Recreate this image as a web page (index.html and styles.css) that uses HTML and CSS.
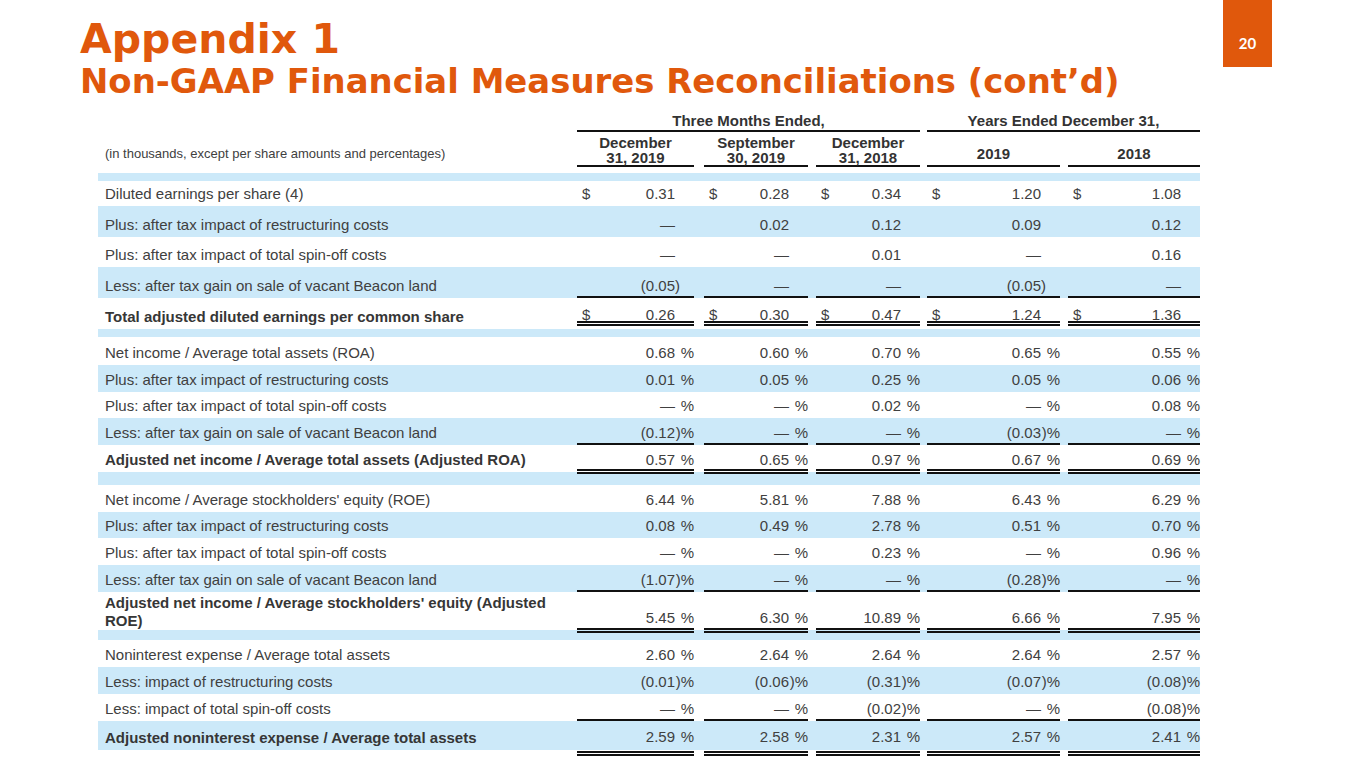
FILE: index.html
```html
<!DOCTYPE html>
<html lang="en">
<head>
<meta charset="utf-8">
<title>Appendix 1</title>
<link rel="stylesheet" href="styles.css">
</head>
<body>
<div class="top">
  <div class="title">
    <h1 class="t1">Appendix 1</h1>
    <h2 class="t2">Non-GAAP Financial Measures Reconciliations (cont’d)</h2>
  </div>
  <div class="pg">20</div>
</div>

<div class="fin">
  <div class="row hA">
    <div></div>
    <div class="grp g1">Three Months Ended,</div>
    <div class="grp g2">Years Ended December 31,</div>
  </div>
  <div class="row cols hB">
    <div class="note">(in thousands, except per share amounts and percentages)</div>
    <div class="ch">December<br>31, 2019</div>
    <div class="ch">September<br>30, 2019</div>
    <div class="ch">December<br>31, 2018</div>
    <div class="ch yr">2019</div>
    <div class="ch yr">2018</div>
  </div>
  <div class="sep b first"></div>

  <!-- Section 1: EPS -->
  <div class="row cols h25">
    <div class="lbl">Diluted earnings per share (4)</div>
    <div class="v"><span class="cur">$</span><span class="n">0.31</span><span class="s"></span></div>
    <div class="v"><span class="cur">$</span><span class="n">0.28</span><span class="s"></span></div>
    <div class="v"><span class="cur">$</span><span class="n">0.34</span><span class="s"></span></div>
    <div class="v"><span class="cur">$</span><span class="n">1.20</span><span class="s"></span></div>
    <div class="v"><span class="cur">$</span><span class="n">1.08</span><span class="s"></span></div>
  </div>
  <div class="row cols h31 b">
    <div class="lbl">Plus: after tax impact of restructuring costs</div>
    <div class="v"><span class="n">—</span><span class="s"></span></div>
    <div class="v"><span class="n">0.02</span><span class="s"></span></div>
    <div class="v"><span class="n">0.12</span><span class="s"></span></div>
    <div class="v"><span class="n">0.09</span><span class="s"></span></div>
    <div class="v"><span class="n">0.12</span><span class="s"></span></div>
  </div>
  <div class="row cols h30">
    <div class="lbl">Plus: after tax impact of total spin-off costs</div>
    <div class="v"><span class="n">—</span><span class="s"></span></div>
    <div class="v"><span class="n">—</span><span class="s"></span></div>
    <div class="v"><span class="n">0.01</span><span class="s"></span></div>
    <div class="v"><span class="n">—</span><span class="s"></span></div>
    <div class="v"><span class="n">0.16</span><span class="s"></span></div>
  </div>
  <div class="row cols h31 b u">
    <div class="lbl">Less: after tax gain on sale of vacant Beacon land</div>
    <div class="v"><span class="n">(0.05</span><span class="s">)</span></div>
    <div class="v"><span class="n">—</span><span class="s"></span></div>
    <div class="v"><span class="n">—</span><span class="s"></span></div>
    <div class="v"><span class="n">(0.05</span><span class="s">)</span></div>
    <div class="v"><span class="n">—</span><span class="s"></span></div>
  </div>
  <div class="row cols h31 uu uu1">
    <div class="lbl bold">Total adjusted diluted earnings per common share</div>
    <div class="v"><span class="cur">$</span><span class="n">0.26</span><span class="s"></span></div>
    <div class="v"><span class="cur">$</span><span class="n">0.30</span><span class="s"></span></div>
    <div class="v"><span class="cur">$</span><span class="n">0.47</span><span class="s"></span></div>
    <div class="v"><span class="cur">$</span><span class="n">1.24</span><span class="s"></span></div>
    <div class="v"><span class="cur">$</span><span class="n">1.36</span><span class="s"></span></div>
  </div>
  <div class="sep b s8"></div>

  <!-- Section 2: ROA -->
  <div class="row cols h28">
    <div class="lbl">Net income / Average total assets (ROA)</div>
    <div class="v p"><span class="n">0.68</span><span class="s">%</span></div>
    <div class="v p"><span class="n">0.60</span><span class="s">%</span></div>
    <div class="v p"><span class="n">0.70</span><span class="s">%</span></div>
    <div class="v p"><span class="n">0.65</span><span class="s">%</span></div>
    <div class="v p"><span class="n">0.55</span><span class="s">%</span></div>
  </div>
  <div class="row cols h27 b">
    <div class="lbl">Plus: after tax impact of restructuring costs</div>
    <div class="v p"><span class="n">0.01</span><span class="s">%</span></div>
    <div class="v p"><span class="n">0.05</span><span class="s">%</span></div>
    <div class="v p"><span class="n">0.25</span><span class="s">%</span></div>
    <div class="v p"><span class="n">0.05</span><span class="s">%</span></div>
    <div class="v p"><span class="n">0.06</span><span class="s">%</span></div>
  </div>
  <div class="row cols h26">
    <div class="lbl">Plus: after tax impact of total spin-off costs</div>
    <div class="v p"><span class="n">—</span><span class="s">%</span></div>
    <div class="v p"><span class="n">—</span><span class="s">%</span></div>
    <div class="v p"><span class="n">0.02</span><span class="s">%</span></div>
    <div class="v p"><span class="n">—</span><span class="s">%</span></div>
    <div class="v p"><span class="n">0.08</span><span class="s">%</span></div>
  </div>
  <div class="row cols h27 b u">
    <div class="lbl">Less: after tax gain on sale of vacant Beacon land</div>
    <div class="v p"><span class="n">(0.12</span><span class="s">)%</span></div>
    <div class="v p"><span class="n">—</span><span class="s">%</span></div>
    <div class="v p"><span class="n">—</span><span class="s">%</span></div>
    <div class="v p"><span class="n">(0.03</span><span class="s">)%</span></div>
    <div class="v p"><span class="n">—</span><span class="s">%</span></div>
  </div>
  <div class="row cols h27 uu uu2">
    <div class="lbl bold">Adjusted net income / Average total assets (Adjusted ROA)</div>
    <div class="v p"><span class="n">0.57</span><span class="s">%</span></div>
    <div class="v p"><span class="n">0.65</span><span class="s">%</span></div>
    <div class="v p"><span class="n">0.97</span><span class="s">%</span></div>
    <div class="v p"><span class="n">0.67</span><span class="s">%</span></div>
    <div class="v p"><span class="n">0.69</span><span class="s">%</span></div>
  </div>
  <div class="sep b s13"></div>

  <!-- Section 3: ROE -->
  <div class="row cols h27">
    <div class="lbl">Net income / Average stockholders' equity (ROE)</div>
    <div class="v p"><span class="n">6.44</span><span class="s">%</span></div>
    <div class="v p"><span class="n">5.81</span><span class="s">%</span></div>
    <div class="v p"><span class="n">7.88</span><span class="s">%</span></div>
    <div class="v p"><span class="n">6.43</span><span class="s">%</span></div>
    <div class="v p"><span class="n">6.29</span><span class="s">%</span></div>
  </div>
  <div class="row cols h26 b">
    <div class="lbl">Plus: after tax impact of restructuring costs</div>
    <div class="v p"><span class="n">0.08</span><span class="s">%</span></div>
    <div class="v p"><span class="n">0.49</span><span class="s">%</span></div>
    <div class="v p"><span class="n">2.78</span><span class="s">%</span></div>
    <div class="v p"><span class="n">0.51</span><span class="s">%</span></div>
    <div class="v p"><span class="n">0.70</span><span class="s">%</span></div>
  </div>
  <div class="row cols h27">
    <div class="lbl">Plus: after tax impact of total spin-off costs</div>
    <div class="v p"><span class="n">—</span><span class="s">%</span></div>
    <div class="v p"><span class="n">—</span><span class="s">%</span></div>
    <div class="v p"><span class="n">0.23</span><span class="s">%</span></div>
    <div class="v p"><span class="n">—</span><span class="s">%</span></div>
    <div class="v p"><span class="n">0.96</span><span class="s">%</span></div>
  </div>
  <div class="row cols h27 b u">
    <div class="lbl">Less: after tax gain on sale of vacant Beacon land</div>
    <div class="v p"><span class="n">(1.07</span><span class="s">)%</span></div>
    <div class="v p"><span class="n">—</span><span class="s">%</span></div>
    <div class="v p"><span class="n">—</span><span class="s">%</span></div>
    <div class="v p"><span class="n">(0.28</span><span class="s">)%</span></div>
    <div class="v p"><span class="n">—</span><span class="s">%</span></div>
  </div>
  <div class="row cols h38 uu uu3">
    <div class="lbl bold two">Adjusted net income / Average stockholders' equity (Adjusted<br>ROE)</div>
    <div class="v p"><span class="n">5.45</span><span class="s">%</span></div>
    <div class="v p"><span class="n">6.30</span><span class="s">%</span></div>
    <div class="v p"><span class="n">10.89</span><span class="s">%</span></div>
    <div class="v p"><span class="n">6.66</span><span class="s">%</span></div>
    <div class="v p"><span class="n">7.95</span><span class="s">%</span></div>
  </div>
  <div class="sep b s10"></div>

  <!-- Section 4: Noninterest expense -->
  <div class="row cols h27">
    <div class="lbl">Noninterest expense / Average total assets</div>
    <div class="v p"><span class="n">2.60</span><span class="s">%</span></div>
    <div class="v p"><span class="n">2.64</span><span class="s">%</span></div>
    <div class="v p"><span class="n">2.64</span><span class="s">%</span></div>
    <div class="v p"><span class="n">2.64</span><span class="s">%</span></div>
    <div class="v p"><span class="n">2.57</span><span class="s">%</span></div>
  </div>
  <div class="row cols h27 b">
    <div class="lbl">Less: impact of restructuring costs</div>
    <div class="v p"><span class="n">(0.01</span><span class="s">)%</span></div>
    <div class="v p"><span class="n">(0.06</span><span class="s">)%</span></div>
    <div class="v p"><span class="n">(0.31</span><span class="s">)%</span></div>
    <div class="v p"><span class="n">(0.07</span><span class="s">)%</span></div>
    <div class="v p"><span class="n">(0.08</span><span class="s">)%</span></div>
  </div>
  <div class="row cols h27 u">
    <div class="lbl">Less: impact of total spin-off costs</div>
    <div class="v p"><span class="n">—</span><span class="s">%</span></div>
    <div class="v p"><span class="n">—</span><span class="s">%</span></div>
    <div class="v p"><span class="n">(0.02</span><span class="s">)%</span></div>
    <div class="v p"><span class="n">—</span><span class="s">%</span></div>
    <div class="v p"><span class="n">(0.08</span><span class="s">)%</span></div>
  </div>
  <div class="row cols h29 b uu uu4">
    <div class="lbl bold">Adjusted noninterest expense / Average total assets</div>
    <div class="v p"><span class="n">2.59</span><span class="s">%</span></div>
    <div class="v p"><span class="n">2.58</span><span class="s">%</span></div>
    <div class="v p"><span class="n">2.31</span><span class="s">%</span></div>
    <div class="v p"><span class="n">2.57</span><span class="s">%</span></div>
    <div class="v p"><span class="n">2.41</span><span class="s">%</span></div>
  </div>
</div>
</body>
</html>
```
FILE: styles.css
```css
* { box-sizing: border-box; }
html, body { margin: 0; padding: 0; background: #fff; }
body {
  width: 1365px;
  height: 768px;
  overflow: hidden;
  font-family: "Liberation Sans", Arial, sans-serif;
  color: #404040;
}

.top {
  display: flex;
  justify-content: space-between;
  align-items: flex-start;
  padding-left: 80px;
  padding-right: 93px;
}
.title {
  padding-top: 19px;
  color: #e0580c;
  font-family: "DejaVu Sans", Verdana, sans-serif;
  font-weight: bold;
}
.t1 { margin: 0; font-size: 41px; line-height: 41px; font-weight: bold; }
.t2 { margin: 5px 0 0; font-size: 33.9px; line-height: 34px; font-weight: bold; white-space: nowrap; }
.pg {
  width: 49px;
  height: 67px;
  background: #e0580c;
  color: #fff;
  font-family: Lato, "Open Sans", sans-serif;
  font-weight: bold;
  font-size: 15px;
  line-height: 18px;
  text-align: center;
  padding-top: 34px;
}

.fin { margin: 13px 0 0 98px; width: 1102px; }

.row {
  display: grid;
  grid-template-columns: 479px 117px 114px 112px 140px 140px;
  font-size: 15px;
}
.cols > :nth-child(3) { margin-left: 10px; }
.cols > :nth-child(4) { margin-left: 8px; }
.cols > :nth-child(5) { margin-left: 7px; }
.cols > :nth-child(6) { margin-left: 8px; }

.b { background: #cce9f9; }

/* header */
.hA { height: 20px; align-items: end; }
.grp {
  font-weight: bold;
  color: #333;
  text-align: center;
  line-height: 17px;
  padding-bottom: 1px;
  border-bottom: 2px solid #111;
}
.g1 { grid-column: 2 / 5; }
.g2 { grid-column: 5 / 7; margin-left: 7px; }

.hB { height: 35px; }
.note { align-self: end; font-size: 13px; line-height: 15px; padding: 0 0 6px 7px; }
.ch {
  align-self: end;
  font-weight: bold;
  color: #333;
  text-align: center;
  line-height: 15px;
  border-bottom: 2px solid #111;
}
.ch.yr { padding-bottom: 4px; }

.sep.first { height: 8px; margin-top: 6px; }
.s8 { height: 8px; }
.s10 { height: 10px; }
.s13 { height: 13px; }

.h25 { height: 25px; }
.h26 { height: 26px; }
.h27 { height: 27px; }
.h28 { height: 28px; }
.h29 { height: 29px; }
.h30 { height: 30px; }
.h31 { height: 31px; }
.h38 { height: 38px; }

/* cells */
.lbl { align-self: end; padding: 0 0 4px 7px; line-height: 17px; white-space: nowrap; }
.lbl.bold { font-weight: bold; color: #363636; }
.lbl.two { line-height: 18px; padding-bottom: 0; }

.v {
  display: flex;
  align-items: flex-end;
  justify-content: flex-end;
  line-height: 12px;
  padding-bottom: 6.5px;
  white-space: nowrap;
}
.cur { margin-right: auto; padding-left: 5px; }
.s { flex: none; width: 19px; text-align: left; }
.p .s { text-align: right; }

.u .v { border-bottom: 2px solid #111; padding-bottom: 4.5px; }
.uu .v { border-bottom: 5px double #111; }
.uu1 .v { margin-bottom: 3px; padding-bottom: 0; }
.uu2 .v { margin-bottom: -2px; padding-bottom: 3.5px; }
.uu3 .v { margin-bottom: -3px; padding-bottom: 4px; }
.uu4 .v { margin-bottom: -6px; padding-bottom: 8.5px; }
```
